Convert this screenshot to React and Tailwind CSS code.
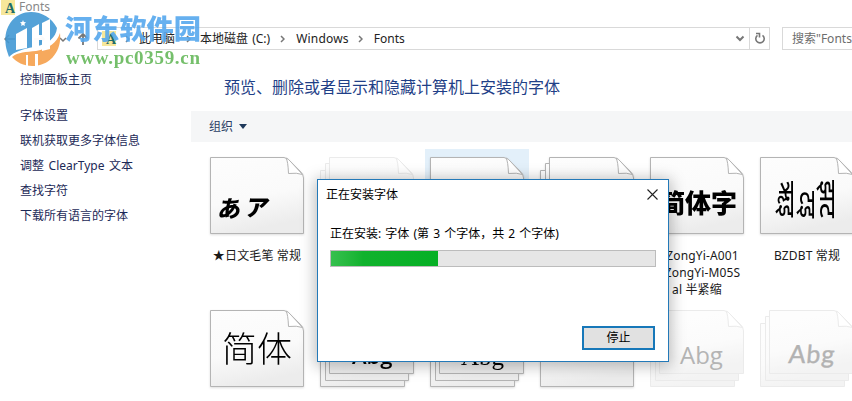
import clsx from 'clsx';

const tasks = [
  '字体设置',
  '联机获取更多字体信息',
  '调整 ClearType 文本',
  '查找字符',
  '下载所有语言的字体',
];

const fonts = [
  { id: 'brush', kind: 'single', label: ['★日文毛笔 常规'] },
  { id: 'hidden', kind: 'stack', faded: true },
  { id: 'selected', kind: 'single', selected: true },
  { id: 'family', kind: 'stack' },
  { id: 'zongyi', kind: 'single', label: ['MZongYi-A001', 'MZongYi-M05S', 'al 半紧缩'] },
  { id: 'bzdbt', kind: 'single', label: ['BZDBT 常规'] },
  { id: 'kai', kind: 'single' },
  { id: 'sans', kind: 'stack' },
  { id: 'serif', kind: 'stack' },
  { id: 'plain', kind: 'single' },
  { id: 'light', kind: 'stack', faded: true },
  { id: 'comic', kind: 'stack', faded: true },
];

const SheetDefs = () => (
  <defs>
    <linearGradient id="paper" x1="0" y1="0" x2="0.25" y2="1">
      <stop offset="0" stopColor="#fdfdfd" />
      <stop offset="0.6" stopColor="#fafafa" />
      <stop offset="1" stopColor="#ececec" />
    </linearGradient>
  </defs>
);

// One sheet of paper with a folded top right corner
const Sheet = ({ x = 0, y = 0, w = 94, h = 77, stroke = '#b4b4b4' }) => (
  <g transform={`translate(${x} ${y})`} stroke={stroke} strokeLinejoin="round">
    <path
      d={`M.5 .5H${w - 20}Q${w - 16} 1 ${w - 13} 5L${w - 4} 14Q${w - 0.5} 17 ${w - 0.5} 21V${h - 0.5}H.5Z`}
      fill="url(#paper)"
    />
    <path
      d={`M${w - 18} 1Q${w - 16} 4 ${w - 15.5} 16.500Q${w - 7} 15.500 ${w - 1.5} 17.5L${w - 13} 5Q${w - 16} 1.500 ${w - 18} 1Z`}
      fill="#fff"
    />
  </g>
);

const Sample = ({ id }) => {
  switch (id) {
    case 'brush':
      return (
        <g fontFamily="Noto Sans CJK JP, sans-serif" fontWeight="900" fill="#000">
          <text transform="translate(7 60) skewX(-10)" fontSize="23">あ</text>
          <text transform="translate(34 59) skewX(-12)" fontSize="23">ア</text>
        </g>
      );
    case 'zongyi':
      return (
        <text x="9" y="56" fontSize="26" fontWeight="900" fontFamily="Noto Sans CJK SC, sans-serif">
          简体字
        </text>
      );
    case 'bzdbt':
      return (
        <g fontFamily="Noto Sans, DejaVu Sans, sans-serif" fontSize="23" fontWeight="500">
          <text transform="translate(19 24) rotate(90)" textLength="36" lengthAdjust="spacingAndGlyphs">ऋइ</text>
          <text transform="translate(40 34) rotate(90)" textLength="27" lengthAdjust="spacingAndGlyphs">टइ</text>
          <text transform="translate(60 23) rotate(90)" textLength="38" lengthAdjust="spacingAndGlyphs">झट</text>
        </g>
      );
    case 'kai':
      return (
        <text x="12" y="52" fontSize="35" fontWeight="300" fontFamily="Noto Sans CJK SC, sans-serif">
          简体
        </text>
      );
    case 'sans':
      return <text x="32" y="54" fontSize="22" fontWeight="600" fontFamily="Open Sans, sans-serif">Abg</text>;
    case 'serif':
      return <text x="31" y="55" fontSize="25" fontFamily="Liberation Serif, serif">Abg</text>;
    case 'plain':
      return <text x="28" y="46" fontSize="20" fontFamily="Noto Sans, sans-serif">Abg</text>;
    case 'light':
      return <text x="30" y="54" fontSize="24" fill="#b4b4b4" fontFamily="Open Sans, sans-serif">Abg</text>;
    case 'comic':
      return (
        <text transform="translate(28 53) skewX(-5)" fontSize="25" fill="#b2b2b2" stroke="#b2b2b2" strokeWidth=".4" fontFamily="Lato, sans-serif" letterSpacing="1">
          Abg
        </text>
      );
    default:
      return null;
  }
};

const FontItem = ({ font }) => {
  const stroke = font.faded ? '#dedede' : '#b4b4b4';
  return (
    <div className="flex w-[104px] flex-col items-center">
      <div className={clsx('flex h-[86px] w-[104px] justify-center pt-2', font.selected && 'bg-[#e3f0fa]')}>
        <svg width="94" height="77" viewBox="0 0 94 77" className={clsx('shrink-0', !font.faded && 'drop-shadow-[0_1px_1px_#00000022]')}>
          <SheetDefs />
          {font.kind === 'stack' ? (
            <g opacity={font.faded ? 0.6 : 1}>
              <Sheet x={0} y={13} w={85} h={64} stroke={stroke} />
              <Sheet x={5} y={6} w={84} h={65} stroke={stroke} />
              <Sheet x={9} y={0} w={85} h={64} stroke={stroke} />
            </g>
          ) : (
            <Sheet stroke={stroke} />
          )}
          <Sample id={font.id} />
        </svg>
      </div>
      <div className="mt-3 text-center text-xs leading-[17px] tracking-[0.15px] whitespace-nowrap text-[#1a1a1a]">
        {font.label?.map((line) => <div key={line}>{line}</div>)}
      </div>
    </div>
  );
};

const Chevron = ({ className }) => (
  <svg width="5" height="8" viewBox="0 0 5 8" fill="none" stroke="#777" strokeWidth="1.5" className={className}>
    <path d="M1 1l3 3-3 3" />
  </svg>
);

const FontFolderIcon = ({ className }) => (
  <div className={clsx('flex h-[15px] w-[14px] items-end justify-end bg-[#f7e79a] font-["Liberation_Serif",serif] text-sm leading-[13px] font-bold text-[#1d6d6b]', className)}>
    A
  </div>
);

const AddressBar = () => (
  <div className="flex h-[23px] shrink-0 items-stretch text-xs text-[#222]">
    <div className="flex w-[97px] shrink-0 items-center">
      <svg width="92" height="16" viewBox="0 0 92 16" fill="none" stroke="#777" strokeWidth="1.5" className="ml-1 shrink-0">
        <path d="M11 8H1M5 4L1 8l4 4" />
        <path d="M30 8h10M36 4l4 4-4 4" stroke="#ccc" />
        <path d="M56 7l3 3 3-3" />
        <path d="M79 14V3M74.500 7.500L79 3l4.500 4.500" strokeWidth="1.800" />
      </svg>
    </div>
    <div className="flex w-[673px] shrink-0 items-center border border-[#d9d9d9]">
      <FontFolderIcon className="ml-1 shrink-0" />
      <Chevron className="ml-[9px] shrink-0" />
      <span className="ml-[9px] whitespace-nowrap">此电脑</span>
      <Chevron className="ml-[11px] shrink-0" />
      <span className="ml-[9px] whitespace-nowrap [word-spacing:1px]">本地磁盘 (C:)</span>
      <Chevron className="ml-[10px] shrink-0" />
      <span className="ml-[11px] tracking-[0.2px]">Windows</span>
      <Chevron className="ml-[9px] shrink-0" />
      <span className="ml-[11px]">Fonts</span>
      <svg width="10" height="7" viewBox="0 0 10 7" fill="none" stroke="#777" strokeWidth="2" className="mr-1 ml-auto">
        <path d="M1.500 1.500L5 5l3.500-3.500" />
      </svg>
      <div className="flex h-full w-5 items-center justify-center border-l border-[#d9d9d9]">
        <svg width="12" height="13" viewBox="0 0 12 13" fill="none" stroke="#777" strokeWidth="1.600">
          <path d="M8.500 3.300A4.200 4.200 0 1 1 3.500 3.300" />
          <path d="M2 1.500h3.500V5.500" />
        </svg>
      </div>
    </div>
    <div className="ml-3 flex w-[240px] shrink-0 items-center border border-[#d9d9d9] pl-[9px] text-[#6d6d6d]">
      搜索"Fonts"
    </div>
  </div>
);

const Sidebar = () => (
  <nav className="flex w-[191px] shrink-0 flex-col pt-[17px] pl-5 text-xs leading-[25px] text-[#1c2957]">
    <a>控制面板主页</a>
    <div className="mt-[11px] flex flex-col">
      {tasks.map((task) => <a key={task} className="[word-spacing:1.5px]">{task}</a>)}
    </div>
  </nav>
);

const InstallDialog = () => (
  <div className="absolute top-[179px] left-[317px] flex h-[183px] w-[352px] flex-col border border-[#2379b8] bg-white text-xs text-black shadow-[0_2px_14px_2px_#00000044]">
    <div className="flex h-[29px] items-center justify-between pr-[10px] pl-2">
      <span>正在安装字体</span>
      <svg width="11" height="11" viewBox="0 0 11 11" stroke="#222" strokeWidth="1.100">
        <path d="M.5 .5l10 10M10.500 .5l-10 10" />
      </svg>
    </div>
    <div className="flex grow flex-col px-3 pt-4 pb-[11px]">
      <div className="leading-[18px] whitespace-nowrap [word-spacing:1px]">正在安装: 字体 (第 3 个字体，共 2 个字体)</div>
      <div className="mt-[7px] h-[17px] w-[326px] border border-[#bcbcbc] bg-[#e6e6e6]">
        <div className="h-full w-[107px] bg-linear-to-r from-[#35c04e] via-[#10b22d] via-30% to-[#06b025]" />
      </div>
      <button className="mt-auto mr-px ml-auto h-6 w-[73px] border-2 border-[#1778b9] bg-[#e1e1e1]">停止</button>
    </div>
  </div>
);

const Watermark = () => (
  <div className="absolute top-[11px] left-1 flex opacity-90">
    <svg width="57" height="56" viewBox="0 0 57 56" className="shrink-0">
      <path d="M3 40C-3 20 8 1 27 1C38 1 48 7 53 17C52 27 44 33 30 36C18 38 10 41 5 46Z" fill="#4299d4" />
      <path d="M56 22C58 40 46 55 28 55C20 55 12 51 8 46C14 41 22 41 32 40C44 38 53 32 56 22Z" fill="#f6a04c" />
      <path d="M12 23L23 17V37L12 39Z" fill="#fff" />
      <path d="M28 17L35 13V24H38V12L46 8V38L38 40V29H35V37L28 38Z" fill="#fff" />
      <path d="M22 44h2v11h-2ZM31 43h3v12h-3Z" fill="#fff" />
      <path d="M19 9l.8 2 2.200 .3-1.500 1.500 .3 2.200-1.800-1-1.800 1 .3-2.200-1.500-1.500 2.200-.3Z" fill="#fff" />
    </svg>
    <div className="ml-1 flex flex-col">
      <div className="-mt-0.5 h-10 font-['Noto_Sans_CJK_SC',serif] text-[27.2px] leading-9 font-black whitespace-nowrap text-[#56a8ee]">河东软件园</div>
      <div className="ml-[1px] font-['Liberation_Serif',serif] text-[19px] leading-[18px] font-bold tracking-[0.7px] text-[#67b95c]">www.pc0359.cn</div>
    </div>
  </div>
);

export default function App() {
  return (
    <div className="relative flex h-[401px] w-[852px] flex-col overflow-hidden bg-white font-['Noto_Sans','Noto_Sans_CJK_SC',sans-serif]">
      <header className="flex h-[27px] shrink-0 items-start pl-[1px] text-xs text-[#888]">
        <FontFolderIcon />
        <span className="ml-1 leading-[14px]">Fonts</span>
      </header>
      <AddressBar />
      <div className="flex min-h-0 grow">
        <Sidebar />
        <main className="flex min-w-0 grow flex-col pt-[25px]">
          <h1 className="pl-[33px] text-base leading-6 whitespace-nowrap text-[#1f3f87]">
            预览、删除或者显示和隐藏计算机上安装的字体
          </h1>
          <div className="mt-3 flex h-[31px] shrink-0 items-center bg-[#f5f6f7] pl-[18px] text-xs text-[#2b3f66]">
            组织
            <svg width="8" height="5" viewBox="0 0 8 5" className="ml-[6px]">
              <path d="M0 0h8L4 5Z" fill="#1e395b" />
            </svg>
          </div>
          <div className="grid auto-rows-[153px] grid-cols-[repeat(6,110px)] pt-[7px] pl-[14px]">
            {fonts.map((font) => <FontItem key={font.id} font={font} />)}
          </div>
        </main>
      </div>
      <InstallDialog />
      <Watermark />
    </div>
  );
}
